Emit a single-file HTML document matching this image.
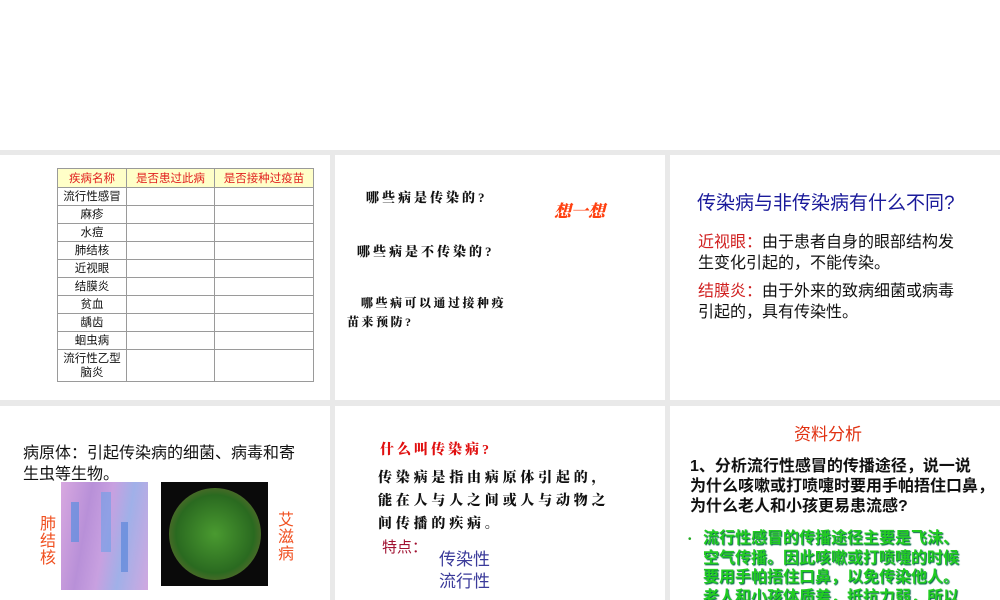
<!DOCTYPE html>
<html><head><meta charset="utf-8">
<style>
*{margin:0;padding:0;box-sizing:border-box}
body{width:1000px;height:600px;background:#fff;position:relative;overflow:hidden;font-family:"Liberation Sans","Noto Sans CJK SC",sans-serif}
.bg{position:absolute;left:0;top:150px;width:1000px;height:450px;background:#e9e9e9}
.p{position:absolute;background:#fff;overflow:hidden}
.a{position:absolute;white-space:nowrap}
table{border-collapse:collapse;position:absolute;left:57px;top:168px;width:257px;font-size:11.5px}
td{border:1px solid #9a9a9a;text-align:center;height:18px;line-height:14px;color:#111}
th{border:1px solid #9a9a9a;background:#ffffc8;color:#e02020;font-weight:normal;height:19px;font-size:11.5px}
.k{font-family:"Liberation Serif","Noto Serif CJK SC",serif;font-weight:900;color:#111;letter-spacing:3px}
</style></head><body>
<div class="bg"></div>

<div class="p" style="left:0;top:155px;width:330px;height:245px"></div>
<table>
<tr><th style="width:69px">疾病名称</th><th style="width:88px">是否患过此病</th><th>是否接种过疫苗</th></tr>
<tr><td>流行性感冒</td><td></td><td></td></tr>
<tr><td>麻疹</td><td></td><td></td></tr>
<tr><td>水痘</td><td></td><td></td></tr>
<tr><td>肺结核</td><td></td><td></td></tr>
<tr><td>近视眼</td><td></td><td></td></tr>
<tr><td>结膜炎</td><td></td><td></td></tr>
<tr><td>贫血</td><td></td><td></td></tr>
<tr><td>龋齿</td><td></td><td></td></tr>
<tr><td>蛔虫病</td><td></td><td></td></tr>
<tr><td style="height:32px">流行性乙型<br>脑炎</td><td></td><td></td></tr>
</table>

<div class="p" style="left:335px;top:155px;width:330px;height:245px">
<div class="a k" style="left:31px;top:32px;font-size:13px;letter-spacing:3px">哪些病是传染的?</div>
<div class="a k" style="left:22px;top:86px;font-size:13px;letter-spacing:3px">哪些病是不传染的?</div>
<div class="a k" style="left:26px;top:139px;font-size:12px;letter-spacing:2.5px">哪些病可以通过接种疫</div>
<div class="a k" style="left:12px;top:158px;font-size:12px;letter-spacing:2.5px">苗来预防?</div>
<div class="a" style="left:219px;top:42px;font-size:17px;font-weight:900;font-style:italic;color:#ff4010;font-family:'Liberation Serif','Noto Serif CJK SC',serif">想一想</div>
</div>

<div class="p" style="left:670px;top:155px;width:330px;height:245px">
<div class="a" style="left:27px;top:33px;font-size:19px;color:#1a1a9a">传染病与非传染病有什么不同?</div>
<div class="a" style="left:28px;top:77px;font-size:16px;line-height:21px;color:#111"><span style="color:#d02020">近视眼：</span>由于患者自身的眼部结构发<br>生变化引起的，不能传染。</div>
<div class="a" style="left:28px;top:126px;font-size:16px;line-height:21px;color:#111"><span style="color:#d02020">结膜炎：</span>由于外来的致病细菌或病毒<br>引起的，具有传染性。</div>
</div>

<div class="p" style="left:0;top:406px;width:330px;height:194px">
<div class="a" style="left:23px;top:37px;font-size:16px;line-height:21px;color:#111">病原体：引起传染病的细菌、病毒和寄<br>生虫等生物。</div>
<div class="a" style="left:61px;top:76px;width:87px;height:108px;background:linear-gradient(100deg,#d8a8e0,#b890d8 30%,#c8a0e0 50%,#a0b0e8 70%,#d0a8e0)">
<div class="a" style="left:10px;top:20px;width:8px;height:40px;background:#5a8ee0;opacity:.7"></div>
<div class="a" style="left:40px;top:10px;width:10px;height:60px;background:#6aa0e8;opacity:.6"></div>
<div class="a" style="left:60px;top:40px;width:7px;height:50px;background:#5080d8;opacity:.6"></div>
</div>
<div class="a" style="left:161px;top:76px;width:107px;height:104px;background:#0a0a0a">
<div class="a" style="left:8px;top:6px;width:92px;height:92px;border-radius:50%;background:radial-gradient(circle,#4a9a30,#2a6a20 60%,#6a6a30 85%,#0a0a0a 100%)"></div>
</div>
<div class="a" style="left:40px;top:110px;font-size:16px;line-height:17px;color:#f05020;white-space:normal;width:17px">肺结核</div>
<div class="a" style="left:278px;top:106px;font-size:16px;line-height:17px;color:#f05020;white-space:normal;width:17px">艾滋病</div>
</div>

<div class="p" style="left:335px;top:406px;width:330px;height:194px">
<div class="a k" style="left:45px;top:33px;font-size:14px;color:#e01010;letter-spacing:3px">什么叫传染病?</div>
<div class="a k" style="left:43px;top:61px;font-size:14px;line-height:23px;letter-spacing:3.8px">传染病是指由病原体引起的，<br>能在人与人之间或人与动物之<br>间传播的疾病。</div>
<div class="a" style="left:47px;top:130px;font-size:15px;color:#a01030">特点：</div>
<div class="a" style="left:104px;top:143px;font-size:17px;line-height:22px;color:#3a3a9a">传染性<br>流行性</div>
</div>

<div class="p" style="left:670px;top:406px;width:330px;height:194px">
<div class="a" style="left:124px;top:14px;font-size:17px;color:#e03010">资料分析</div>
<div class="a" style="left:20px;top:51px;font-size:16px;line-height:20px;font-weight:bold;color:#111">1、分析流行性感冒的传播途径，说一说<br>为什么咳嗽或打喷嚏时要用手帕捂住口鼻，<br>为什么老人和小孩更易患流感?</div>
<div class="a" style="left:18px;top:128px;font-size:10px;color:#2a2">•</div>
<div class="a" style="left:33px;top:123px;font-size:16px;line-height:19.5px;font-weight:bold;color:#22cc22;text-shadow:1px 1px 1px #064">流行性感冒的传播途径主要是飞沫、<br>空气传播。因此咳嗽或打喷嚏的时候<br>要用手帕捂住口鼻，以免传染他人。<br>老人和小孩体质差，抵抗力弱，所以</div>
</div>
</body></html>
